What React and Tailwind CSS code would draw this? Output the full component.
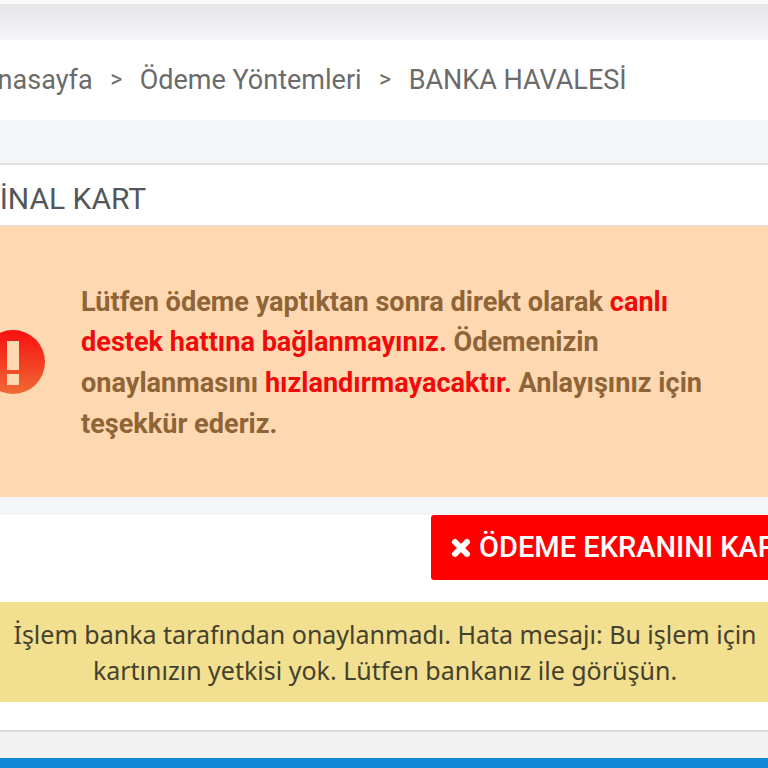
import React from "react";

const roboto = "font-['Roboto',sans-serif]";

const App = () => {
  return (
    <div className={`h-[768px] w-[768px] overflow-hidden bg-[#f5f6f8] ${roboto}`}>
      <div className="h-[4px] bg-[#fafafa]" />
      <div className="h-[36px] bg-gradient-to-b from-[#e6e6e8] to-[#f5f6f8]" />

      <div className="flex h-[80px] items-center gap-[17.5px] whitespace-nowrap bg-white text-[27px] text-[#6b6b6b]">
        <span className="ml-[-20px]">Anasayfa</span>
        <span className="text-[23px]">&gt;</span>
        <span>Ödeme Yöntemleri</span>
        <span className="text-[23px]">&gt;</span>
        <span>BANKA HAVALESİ</span>
      </div>

      <div className="mt-[43px] h-[62px] border-t-2 border-[#e2e3e5] bg-white">
        <div className="ml-[-80px] whitespace-nowrap pt-[16px] text-[30px] leading-[36px] text-[#53575b]">
          TERMİNAL KART
        </div>
      </div>

      <div className="flex h-[272px] items-center border-t-2 border-[#efd9c6] bg-[#fed8b1]">
        <svg className="ml-[-20px] h-[66px] w-[66px] shrink-0" viewBox="0 0 66 66">
          <defs>
            <linearGradient id="alert" x1="0" y1="0" x2="0" y2="1">
              <stop offset="0" stopColor="#f80f0f" />
              <stop offset="1" stopColor="#ef6a35" />
            </linearGradient>
          </defs>
          <circle cx="33" cy="33" r="32" fill="url(#alert)" />
          <path d="M27 12h12v29H27z M27 45h12v11H27z" fill="#fed8b1" />
        </svg>
        <p className="ml-[35px] w-[640px] pt-[2px] text-[27.1px] font-bold leading-[40.6px] text-[#8f6437]">
          Lütfen ödeme yaptıktan sonra direkt olarak{" "}
          <span className="text-[#f00a0a]">canlı destek hattına bağlanmayınız.</span>{" "}
          Ödemenizin onaylanmasını{" "}
          <span className="text-[#f00a0a]">hızlandırmayacaktır.</span> Anlayışınız için
          teşekkür ederiz.
        </p>
      </div>

      <div className="h-[233px] bg-white">
        <div className="h-[18px] bg-[#f5f6f8]" />
        <div className="flex h-[87px] items-start">
          <button className="ml-[431px] flex h-[65px] w-[420px] shrink-0 items-center gap-[8px] whitespace-nowrap rounded-[3px] bg-[#ff0000] pl-[20px] text-[29px] font-medium text-white">
            <svg className="h-[20px] w-[20px] shrink-0" viewBox="0 0 20 20">
              <path d="M4 4l12 12M16 4L4 16" stroke="#fff" strokeWidth="6" strokeLinecap="round" />
            </svg>
            ÖDEME EKRANINI KAPAT
          </button>
        </div>
        <div className="flex h-[100px] items-center justify-center bg-[#f2df90] pl-[2px] text-center font-['Noto_Sans',sans-serif] text-[25px] leading-[36px] text-[#45412e]">
          <p className="w-[768px] shrink-0">
            İşlem banka tarafından onaylanmadı. Hata mesajı: Bu işlem için
            <br />
            kartınızın yetkisi yok. Lütfen bankanız ile görüşün.
          </p>
        </div>
      </div>

      <div className="h-[28px] border-t-2 border-[#dcdcdc] bg-[#f3f3f4]" />
      <div className="h-[10px] bg-[#1289d6]" />
    </div>
  );
};

export default App;
